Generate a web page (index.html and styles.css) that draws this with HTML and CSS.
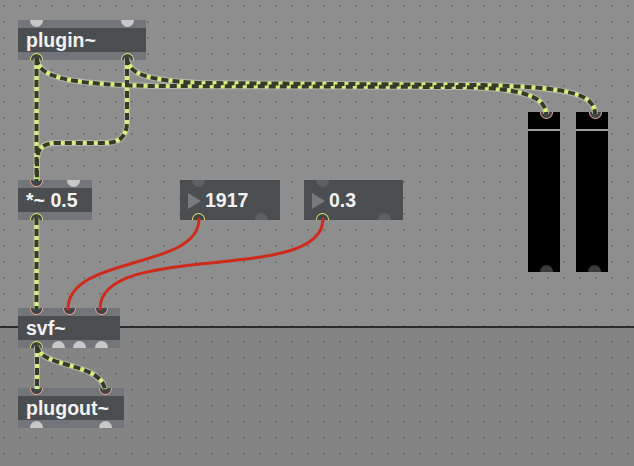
FILE: index.html
```html
<!DOCTYPE html>
<html>
<head>
<meta charset="utf-8">
<link rel="stylesheet" href="styles.css">
</head>
<body>
<div class="patcher">
  <div class="area area-top"></div>
  <div class="divider"></div>
  <div class="area area-bottom"></div>

  <div class="obj o-plugin">
    <div class="band band-in"><span class="port in"></span><span class="port in"></span></div>
    <div class="label">plugin~</div>
    <div class="band band-out"><span class="port out sig"></span><span class="port out sig"></span></div>
  </div>

  <div class="obj o-mul">
    <div class="band band-in"><span class="port in on"></span><span class="port in"></span></div>
    <div class="label">*~ 0.5</div>
    <div class="band band-out"><span class="port out sig"></span></div>
  </div>

  <div class="numbox o-num1">
    <div class="nband nband-in"><span class="port in dim"></span></div>
    <div class="nrow"><span class="tri"></span><span class="nval">1917</span></div>
    <div class="nband nband-out"><span class="port out sig"></span><span class="port out dim"></span></div>
  </div>

  <div class="numbox o-num2">
    <div class="nband nband-in"><span class="port in dim"></span></div>
    <div class="nrow"><span class="tri"></span><span class="nval">0.3</span></div>
    <div class="nband nband-out"><span class="port out sig"></span><span class="port out dim"></span></div>
  </div>

  <div class="obj o-svf">
    <div class="band band-in"><span class="port in on"></span><span class="port in on"></span><span class="port in on"></span></div>
    <div class="label">svf~</div>
    <div class="band band-out"><span class="port out sig"></span><span class="port out"></span><span class="port out"></span><span class="port out"></span></div>
  </div>

  <div class="obj o-plugout">
    <div class="band band-in"><span class="port in on"></span><span class="port in on"></span></div>
    <div class="label">plugout~</div>
    <div class="band band-out"><span class="port out"></span><span class="port out"></span></div>
  </div>

  <div class="meter o-meter1">
    <div class="mtop"><span class="port in on mport"></span></div>
    <div class="msep"></div>
    <div class="mbody"><span class="port out mout"></span></div>
  </div>

  <div class="meter o-meter2">
    <div class="mtop"><span class="port in on mport"></span></div>
    <div class="msep"></div>
    <div class="mbody"><span class="port out mout"></span></div>
  </div>

  <svg class="cables" width="634" height="466" viewBox="0 0 634 466">
    <g class="sig-halo">
      <path d="M36.5,58 V181"/>
      <path d="M127,58 V122 C127,138 118,143 104,143 H56 C43,143 37,149 37,160 V181"/>
      <path d="M37,58 C37,80 80,84 150,86 L460,87 C520,88 546,96 546,114"/>
      <path d="M127,58 C129,74 145,80 200,83 L480,85 C565,87 595,93 595,114"/>
      <path d="M36.5,218 V309"/>
      <path d="M37,346 V389"/>
      <path d="M37,346 C40,368 100,362 105,389"/>
    </g>
    <g class="sig-base">
      <path d="M36.5,58 V181"/>
      <path d="M127,58 V122 C127,138 118,143 104,143 H56 C43,143 37,149 37,160 V181"/>
      <path d="M37,58 C37,80 80,84 150,86 L460,87 C520,88 546,96 546,114"/>
      <path d="M127,58 C129,74 145,80 200,83 L480,85 C565,87 595,93 595,114"/>
      <path d="M36.5,218 V309"/>
      <path d="M37,346 V389"/>
      <path d="M37,346 C40,368 100,362 105,389"/>
    </g>
    <g class="sig-dash">
      <path d="M36.5,58 V181"/>
      <path d="M127,58 V122 C127,138 118,143 104,143 H56 C43,143 37,149 37,160 V181"/>
      <path d="M37,58 C37,80 80,84 150,86 L460,87 C520,88 546,96 546,114"/>
      <path d="M127,58 C129,74 145,80 200,83 L480,85 C565,87 595,93 595,114"/>
      <path d="M36.5,218 V309"/>
      <path d="M37,346 V389"/>
      <path d="M37,346 C40,368 100,362 105,389"/>
    </g>
    <g class="ctl">
      <path d="M199,219 C199,270 68,255 68,309"/>
      <path d="M323,219 C323,285 100,240 100,309"/>
    </g>
  </svg>
</div>
</body>
</html>
```
FILE: styles.css
```css
html, body {
  margin: 0;
  padding: 0;
}
body {
  width: 634px;
  height: 466px;
  overflow: hidden;
  font-family: "Liberation Sans", Arial, sans-serif;
}
.patcher {
  position: relative;
  width: 634px;
  height: 466px;
  display: flex;
  flex-direction: column;
}
.area {
  background-color: #767676;
  background-size: 16px 16px;
}
.area-top {
  height: 326px;
  background-image:
    linear-gradient(to bottom, transparent 2px, #8e8e8e 2px),
    linear-gradient(to right, transparent 2px, #8e8e8e 2px);
  background-position: 3px 5px;
}
.divider {
  height: 2px;
  background: #2a2a2a;
}
.area-bottom {
  flex: 1;
  background-color: #6e6e6e;
  background-image:
    linear-gradient(to bottom, transparent 2px, #848484 2px),
    linear-gradient(to right, transparent 2px, #848484 2px);
  background-position: 3px 13px;
}

/* object boxes */
.obj {
  position: absolute;
  display: flex;
  flex-direction: column;
}
.band {
  height: 8px;
  background: #72757a;
  display: flex;
  justify-content: space-between;
  padding: 0 12px;
}
.band-in { align-items: flex-start; }
.band-out { align-items: flex-end; }
.label {
  height: 24px;
  line-height: 24px;
  background: #4a4e50;
  color: #f2f2f2;
  font-weight: bold;
  font-size: 19.5px;
  padding-left: 8px;
  white-space: nowrap;
}

/* ports */
.port {
  display: block;
  width: 13px;
  height: 7px;
  box-sizing: border-box;
  background: #c7c8ca;
}
.port.in { border-radius: 0 0 7px 7px; }
.port.out { border-radius: 7px 7px 0 0; }
.port.in.on {
  background: #3f4446;
  border: 1.5px solid #f0a395;
  border-top: none;
}
.port.out.sig {
  background: #3f4446;
  border: 1.5px solid #d8e46c;
  border-bottom: none;
}
.port.dim { background: #5d6164; }

/* positions on the canvas */
.o-plugin { left: 18px; top: 20px; width: 128px; }
.o-mul { left: 18px; top: 180px; width: 74px; }
.o-svf { left: 18px; top: 308px; width: 102px; }
.o-plugout { left: 18px; top: 388px; width: 106px; }
.o-num1 { left: 180px; top: 180px; width: 100px; }
.o-num2 { left: 304px; top: 180px; width: 99px; }
.o-meter1 { left: 528px; top: 112px; }
.o-meter2 { left: 576px; top: 112px; }

/* number boxes */
.numbox {
  position: absolute;
  height: 40px;
  background: #4a4e50;
  display: flex;
  flex-direction: column;
}
.nband {
  height: 8px;
  display: flex;
  justify-content: space-between;
  padding: 0 12px;
}
.nband-in { align-items: flex-start; }
.nband-out { align-items: flex-end; }
.nrow {
  height: 24px;
  display: flex;
  align-items: center;
  padding-left: 8px;
}
.tri {
  width: 0;
  height: 0;
  border-top: 8.5px solid transparent;
  border-bottom: 8.5px solid transparent;
  border-left: 13px solid #777b7e;
  margin-right: 4px;
  margin-top: 1px;
}
.nval {
  color: #f2f2f2;
  font-weight: bold;
  font-size: 19.5px;
  line-height: 24px;
}

/* meters */
.meter {
  position: absolute;
  width: 32px;
  height: 160px;
  background: #000;
  display: flex;
  flex-direction: column;
}
.mtop {
  height: 17px;
  padding-left: 12px;
}
.o-meter2 .mtop { padding-left: 13px; }
.port.mport { background: #4b5053; }
.msep {
  height: 2px;
  background: #9c9c9c;
}
.mbody {
  flex: 1;
  display: flex;
  align-items: flex-end;
  padding-left: 12px;
}
.port.mout { background: #3a3a3a; }

/* cables */
.cables {
  position: absolute;
  left: 0;
  top: 0;
  pointer-events: none;
}
.cables path {
  fill: none;
}
.sig-halo path {
  stroke: rgba(190, 192, 186, 0.7);
  stroke-width: 6;
}
.sig-base path {
  stroke: #d6ef7c;
  stroke-width: 4;
}
.sig-dash path {
  stroke: #353a2a;
  stroke-width: 4;
  stroke-dasharray: 7 4;
}
.ctl path {
  stroke: #cf2b1c;
  stroke-width: 3;
  stroke-linecap: round;
}
```
